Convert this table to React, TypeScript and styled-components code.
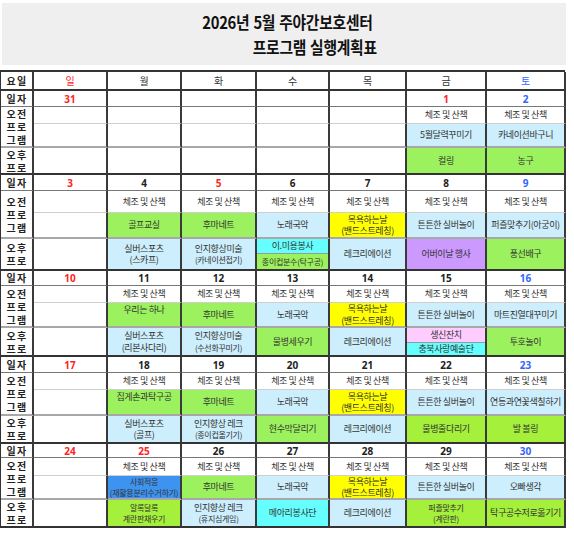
import React from 'react';
import styled, { createGlobalStyle } from 'styled-components';

const Global = createGlobalStyle`
  html, body { margin: 0; padding: 0; background: #fff; }
  body { font-family: "Noto Sans CJK KR", "Noto Sans", sans-serif; }
`;

const COLS = '33px 74px 74px 75px 73px 77px 80px 79px';

const B = '#cdeefc';
const G = '#9cf25e';
const L = '#a4f03a';
const Y = '#ffff00';
const CY = '#66ffff';
const P = '#cc99ff';
const PK = '#ffccff';
const SB = '#3e93f0';

type Ev = { t: string; s?: string; bg?: string; tSm?: boolean; sSm?: boolean; top?: boolean };
type Day = { d: string; c?: 'red' | 'blue'; am1?: boolean; am2?: Ev; pm?: Ev; split?: [Ev, Ev] };
type Week = { h: [number, number, number, number]; days: Day[] };

const BATH: Ev = { t: '목욕하는날', s: '(밴드스트레칭)', bg: Y };
const REC: Ev = { t: '레크리에이션', bg: B };
const SILVER: Ev = { t: '튼튼한 실버놀이', bg: B };
const SONG: Ev = { t: '노래국악', bg: B };
const HUMA: Ev = { t: '후마네트', bg: G };

const weeks: Week[] = [
  {
    h: [16, 17, 24, 27],
    days: [
      { d: '31', c: 'red' },
      { d: '' },
      { d: '' },
      { d: '' },
      { d: '' },
      { d: '1', c: 'red', am1: true, am2: { t: '5월달력꾸미기', bg: B }, pm: { t: '컬링', bg: G } },
      { d: '2', c: 'blue', am1: true, am2: { t: '카네이션바구니', bg: B }, pm: { t: '농구', bg: G } },
    ],
  },
  {
    h: [16, 22, 26, 32],
    days: [
      { d: '3', c: 'red' },
      { d: '4', am1: true, am2: { t: '골프교실', bg: G }, pm: { t: '실버스포츠', s: '(스카프)', bg: B } },
      { d: '5', c: 'red', am1: true, am2: HUMA, pm: { t: '인지향상미술', s: '(카네이션접기)', sSm: true, bg: B } },
      { d: '6', am1: true, am2: SONG, split: [{ t: '이.미용봉사', bg: CY }, { t: '종이컵분수(탁구공)', tSm: true, bg: G }] },
      { d: '7', am1: true, am2: BATH, pm: REC },
      { d: '8', am1: true, am2: SILVER, pm: { t: '어버이날 행사', bg: P } },
      { d: '9', c: 'blue', am1: true, am2: { t: '퍼즐맞추기(아궁이)', bg: B }, pm: { t: '풍선배구', bg: G } },
    ],
  },
  {
    h: [15, 17, 25, 29],
    days: [
      { d: '10', c: 'red' },
      { d: '11', am1: true, am2: { t: '우리는 하나', bg: G, top: true }, pm: { t: '실버스포츠', s: '(리본사다리)', bg: B } },
      { d: '12', am1: true, am2: HUMA, pm: { t: '인지향상미술', s: '(수선화꾸미기)', sSm: true, bg: B } },
      { d: '13', am1: true, am2: SONG, pm: { t: '물병세우기', bg: G } },
      { d: '14', am1: true, am2: BATH, pm: REC },
      { d: '15', am1: true, am2: SILVER, split: [{ t: '생신잔치', bg: PK }, { t: '충북사랑예술단', bg: CY }] },
      { d: '16', c: 'blue', am1: true, am2: { t: '마트진열대꾸미기', bg: B }, pm: { t: '투호놀이', bg: G } },
    ],
  },
  {
    h: [16, 17, 26, 28],
    days: [
      { d: '17', c: 'red' },
      { d: '18', am1: true, am2: { t: '집게손과탁구공', bg: G, top: true }, pm: { t: '실버스포츠', s: '(골프)', bg: B } },
      { d: '19', am1: true, am2: HUMA, pm: { t: '인지향상 레크', s: '(종이컵옮기기)', sSm: true, bg: B } },
      { d: '20', am1: true, am2: SONG, pm: { t: '현수막달리기', bg: G } },
      { d: '21', am1: true, am2: BATH, pm: REC },
      { d: '22', am1: true, am2: SILVER, pm: { t: '물병줄다리기', bg: L } },
      { d: '23', c: 'blue', am1: true, am2: { t: '연등과연꽃색칠하기', bg: B }, pm: { t: '발 볼링', bg: L } },
    ],
  },
  {
    h: [14, 18, 24, 28],
    days: [
      { d: '24', c: 'red' },
      { d: '25', c: 'red', am1: true, am2: { t: '사회적응', s: '(재활용분리수거하기)', tSm: true, sSm: true, bg: SB }, pm: { t: '알록달록', s: '계란판채우기', tSm: true, sSm: true, bg: L } },
      { d: '26', am1: true, am2: HUMA, pm: { t: '인지향상 레크', s: '(휴지심게임)', sSm: true, bg: B } },
      { d: '27', am1: true, am2: SONG, pm: { t: '메아리봉사단', bg: CY } },
      { d: '28', am1: true, am2: BATH, pm: REC },
      { d: '29', am1: true, am2: SILVER, pm: { t: '퍼즐맞추기', s: '(계란판)', tSm: true, sSm: true, bg: L } },
      { d: '30', c: 'blue', am1: true, am2: { t: '오빠생각', bg: B }, pm: { t: '탁구공수저로옮기기', bg: L } },
    ],
  },
];

const Page = styled.div`
  width: 574px;
  height: 537px;
  padding-top: 3px;
  box-sizing: border-box;
  overflow: hidden;
`;

const TitleBox = styled.div`
  margin-left: 2px;
  width: 564px;
  height: 62px;
  background: #efefef;
  display: flex;
  flex-direction: column;
  align-items: center;
  justify-content: center;
`;

const TitleLine = styled.div<{ $shift?: number }>`
  font-family: "Noto Sans CJK KR", sans-serif;
  font-size: 17px;
  font-weight: 700;
  letter-spacing: -0.3px;
  word-spacing: 1px;
  line-height: 25px;
  color: #111;
  padding-left: ${(p) => p.$shift || 0}px;
  white-space: pre;
  transform: scaleX(0.87);
`;

const Table = styled.div`
  margin-top: 5px;
  width: 565px;
  border-top: 2px solid #333;
  border-left: 1px solid #333;
  box-sizing: border-box;
`;

const HeaderRow = styled.div`
  display: grid;
  grid-template-columns: ${COLS};
  height: 19px;
`;

const HeadCell = styled.div<{ $color?: string }>`
  box-sizing: border-box;
  border-right: 2px solid #3a3a3a;
  border-bottom: 2px solid #333;
  display: flex;
  align-items: center;
  justify-content: center;
  font-size: 10px;
  color: ${(p) => p.$color || '#333'};
`;

const WeekGrid = styled.div<{ $rows: string }>`
  display: grid;
  grid-template-columns: ${COLS};
  grid-template-rows: ${(p) => p.$rows};
`;

type RowKind = 'date' | 'am1' | 'am2' | 'pm';

const borderFor = (r: RowKind) =>
  r === 'date'
    ? '1px solid #777'
    : r === 'am1'
    ? '1px solid #cfcfcf'
    : r === 'am2'
    ? '2px solid #a8a8a8'
    : '2px solid #333';

const Cell = styled.div<{ $row: RowKind; $bg?: string; $top?: boolean }>`
  box-sizing: border-box;
  border-right: 2px solid #3a3a3a;
  border-bottom: ${(p) => borderFor(p.$row)};
  background: ${(p) => p.$bg || '#fff'};
  display: flex;
  flex-direction: column;
  align-items: center;
  justify-content: ${(p) => (p.$top ? 'flex-start' : 'center')};
  padding-top: ${(p) => (p.$top ? '1px' : '0')};
  text-align: center;
  overflow: hidden;
  min-width: 0;
`;

const LabelCell = styled.div<{ $row: RowKind; $span?: boolean }>`
  box-sizing: border-box;
  border-right: 2px solid #3a3a3a;
  border-bottom: ${(p) => borderFor(p.$row)};
  grid-row: ${(p) => (p.$span ? 'span 2' : 'auto')};
  display: flex;
  flex-direction: column;
  align-items: center;
  justify-content: center;
  overflow: hidden;
`;

const LabelText = styled.div<{ $lh?: number }>`
  font-size: 10px;
  font-weight: 700;
  letter-spacing: 1.2px;
  padding-left: 1px;
  line-height: ${(p) => p.$lh || 14}px;
  color: #222;
  white-space: pre-line;
  text-align: center;
`;

const DateNum = styled.span<{ $color?: string }>`
  font-family: "Noto Sans", "Liberation Sans", sans-serif;
  font-size: 10px;
  font-weight: 700;
  line-height: 12px;
  color: ${(p) => p.$color || '#222'};
`;

const EvText = styled.div<{ $sm?: boolean }>`
  font-size: ${(p) => (p.$sm ? 8 : 9)}px;
  letter-spacing: ${(p) => (p.$sm ? -0.3 : -0.4)}px;
  line-height: 11.5px;
  color: #333;
  white-space: nowrap;
`;

const Split = styled.div`
  align-self: stretch;
  flex: 1;
  display: flex;
  flex-direction: column;
`;

const SplitTop = styled.div<{ $bg: string }>`
  height: 14px;
  background: ${(p) => p.$bg};
  border-bottom: 1px solid #9a9a9a;
  display: flex;
  align-items: center;
  justify-content: center;
`;

const SplitBottom = styled.div<{ $bg: string }>`
  flex: 1;
  background: ${(p) => p.$bg};
  display: flex;
  align-items: center;
  justify-content: center;
`;

const RED = '#ff2222';
const BLUE = '#3366ff';
const colorOf = (c?: 'red' | 'blue') => (c === 'red' ? RED : c === 'blue' ? BLUE : undefined);

const EvContent = ({ ev }: { ev: Ev }) => (
  <>
    <EvText $sm={ev.tSm}>{ev.t}</EvText>
    {ev.s && <EvText $sm={ev.sSm}>{ev.s}</EvText>}
  </>
);

const WeekBlock = ({ w }: { w: Week }) => (
  <WeekGrid $rows={w.h.map((x) => `${x}px`).join(' ')}>
    <LabelCell $row="date">
      <LabelText>일자</LabelText>
    </LabelCell>
    {w.days.map((d, i) => (
      <Cell key={`d${i}`} $row="date">
        <DateNum $color={colorOf(d.c)}>{d.d}</DateNum>
      </Cell>
    ))}
    <LabelCell $row="am2" $span>
      <LabelText $lh={13}>{'오전\n프로\n그램'}</LabelText>
    </LabelCell>
    {w.days.map((d, i) => (
      <Cell key={`a${i}`} $row="am1">
        {d.am1 && <EvText>체조 및 산책</EvText>}
      </Cell>
    ))}
    {w.days.map((d, i) => (
      <Cell key={`b${i}`} $row="am2" $bg={d.am2?.bg} $top={d.am2?.top}>
        {d.am2 && <EvContent ev={d.am2} />}
      </Cell>
    ))}
    <LabelCell $row="pm">
      <LabelText $lh={13}>{'오후\n프로'}</LabelText>
    </LabelCell>
    {w.days.map((d, i) => (
      <Cell key={`p${i}`} $row="pm" $bg={d.pm?.bg}>
        {d.pm && <EvContent ev={d.pm} />}
        {d.split && (
          <Split>
            <SplitTop $bg={d.split[0].bg!}>
              <EvText $sm={d.split[0].tSm}>{d.split[0].t}</EvText>
            </SplitTop>
            <SplitBottom $bg={d.split[1].bg!}>
              <EvText $sm={d.split[1].tSm}>{d.split[1].t}</EvText>
            </SplitBottom>
          </Split>
        )}
      </Cell>
    ))}
  </WeekGrid>
);

const heads: { t: string; c?: 'red' | 'blue' }[] = [
  { t: '일', c: 'red' },
  { t: '월' },
  { t: '화' },
  { t: '수' },
  { t: '목' },
  { t: '금' },
  { t: '토', c: 'blue' },
];

export default function App() {
  return (
    <Page>
      <Global />
      <TitleBox>
        <TitleLine $shift={8}>2026년 5월 주야간보호센터</TitleLine>
        <TitleLine $shift={70}>프로그램 실행계획표</TitleLine>
      </TitleBox>
      <Table>
        <HeaderRow>
          <HeadCell>
            <LabelText>요일</LabelText>
          </HeadCell>
          {heads.map((h) => (
            <HeadCell key={h.t} $color={colorOf(h.c)}>
              {h.t}
            </HeadCell>
          ))}
        </HeaderRow>
        {weeks.map((w, i) => (
          <WeekBlock key={i} w={w} />
        ))}
      </Table>
    </Page>
  );
}
